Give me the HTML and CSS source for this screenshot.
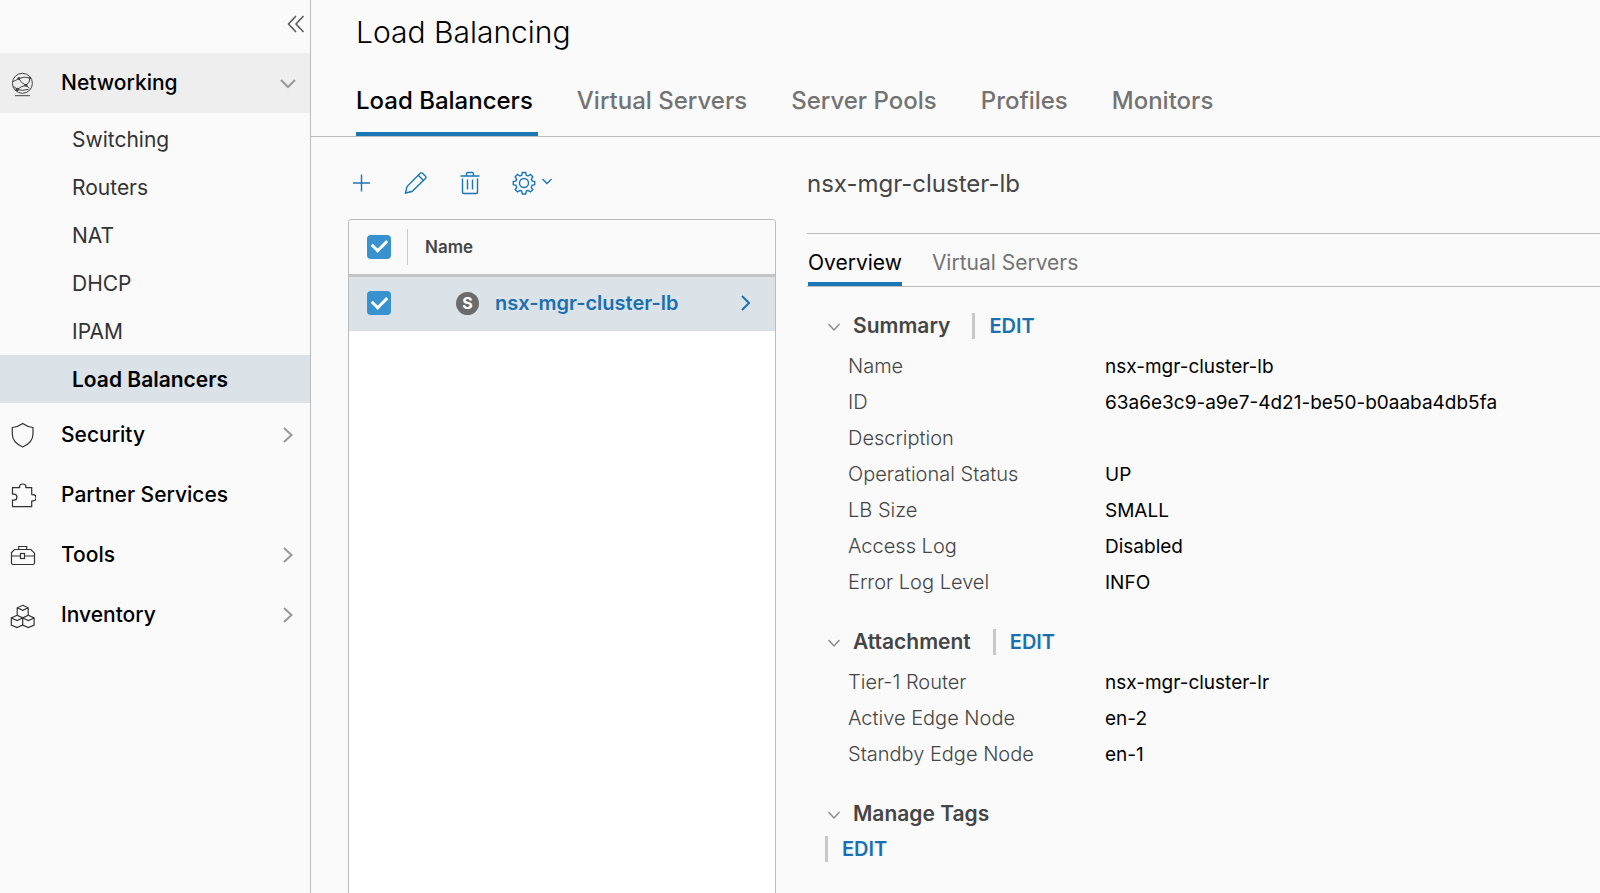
FILE: index.html
```html
<!DOCTYPE html>
<html lang="en">
<head>
<meta charset="utf-8">
<title>Load Balancing</title>
<link rel="stylesheet" href="styles.css">
</head>
<body class="app">
<nav class="sidebar" aria-label="Main">
  <div class="sidebar-top">
    <button class="icon-button" type="button" aria-label="Collapse menu">
      <svg class="icon-collapse" width="18" height="18" viewBox="0 0 18 18"><path d="M9 1 1.500 9 9 17M16.500 1 9 9l7.500 8"/></svg>
    </button>
  </div>
  <a class="nav-item nav-item-open" href="#">
    <svg class="nav-icon nav-icon-fine" viewBox="0 0 28 28"><circle cx="14.400" cy="14.300" r="10"/><path d="M7 26.700h15M10.800 9.500q5.500-2.500 11.200-.5M10.800 9.500q2 4.500 7.200 6.800M18 16.300q4-2.500 4-7.300M18 16.300q-5 .8-8.700 4.200M4.800 12.500q3-.8 6-3M5.500 17.500q2 1 3.800 3M9.300 20.500q5 1.800 11.200-.2M18 16.300l3.500 3"/><circle class="dot" cx="10.800" cy="9.500" r="1.500"/><circle class="dot" cx="22" cy="9" r="1.300"/><circle class="dot" cx="18" cy="16.300" r="1.500"/><circle class="dot" cx="9.300" cy="20.500" r="1.800"/></svg>
    <span class="nav-label">Networking</span>
    <svg class="chevron" width="18" height="18" viewBox="0 0 18 18"><path d="m2 6 7 7 7-7"/></svg>
  </a>
  <ul class="subnav">
    <li><a class="subnav-item" href="#">Switching</a></li>
    <li><a class="subnav-item" href="#">Routers</a></li>
    <li><a class="subnav-item" href="#">NAT</a></li>
    <li><a class="subnav-item" href="#">DHCP</a></li>
    <li><a class="subnav-item" href="#">IPAM</a></li>
    <li><a class="subnav-item subnav-item-active" href="#" aria-current="page">Load Balancers</a></li>
  </ul>
  <a class="nav-item" href="#">
    <svg class="nav-icon" viewBox="0 0 28 28"><path d="M14.700 2.500Q19 5.700 25 6.500V13q0 8.500-10.300 13Q4.300 21.500 4.300 13V6.500Q10.500 5.700 14.700 2.500Z"/></svg>
    <span class="nav-label">Security</span>
    <svg class="chevron" width="18" height="18" viewBox="0 0 18 18"><path d="m5 2 7.500 7L5 16"/></svg>
  </a>
  <a class="nav-item" href="#">
    <svg class="nav-icon" viewBox="0 0 28 28"><path d="M4.500 6.700h6.700c.8 0 .3-.7.3-1.200a3.200 2.500 0 0 1 6.400 0c0 .5-.5 1.200.3 1.200h5.500v6.500c0 1 .6.500 1.400.5a3 3.100 0 0 1 0 6.200c-.8 0-1.400-.5-1.400.5v5.300H4.500v-6.500h1.400a3 3 0 0 0 0-6H4.500Z"/></svg>
    <span class="nav-label">Partner Services</span>
  </a>
  <a class="nav-item" href="#">
    <svg class="nav-icon" viewBox="0 0 28 28"><path d="M6.500 8.500h16.400l3.600 3.700V22q0 1.500-1.500 1.500H5q-1.500 0-1.500-1.500V11.500ZM10.700 8.500v-3h8v3M3.500 15h8.800M16.700 15h9.800"/><rect x="12.500" y="12.500" width="4" height="5"/></svg>
    <span class="nav-label">Tools</span>
    <svg class="chevron" width="18" height="18" viewBox="0 0 18 18"><path d="m5 2 7.500 7L5 16"/></svg>
  </a>
  <a class="nav-item" href="#">
    <svg class="nav-icon" viewBox="0 0 28 28"><path d="m14.700 4.300 5.500 2.500v7.500l-5.500 2.500-5.500-2.500V6.800ZM9.200 6.800l5.500 2.500 5.500-2.500M9 14.300l5.700 2.700v7L9 26.500 3.300 24v-7ZM3.300 17 9 19.500l5.700-2.500M20.400 14.300l5.700 2.700v7l-5.700 2.500-5.700-2.500v-7ZM14.700 17l5.700 2.500 5.700-2.500"/></svg>
    <span class="nav-label">Inventory</span>
    <svg class="chevron" width="18" height="18" viewBox="0 0 18 18"><path d="m5 2 7.500 7L5 16"/></svg>
  </a>
</nav>

<main class="main">
  <header class="page-header">
    <h1 class="page-title">Load Balancing</h1>
    <nav class="tabs" aria-label="Load balancing">
      <a class="tab tab-active" href="#" aria-current="page">Load Balancers</a>
      <a class="tab" href="#">Virtual Servers</a>
      <a class="tab" href="#">Server Pools</a>
      <a class="tab" href="#">Profiles</a>
      <a class="tab" href="#">Monitors</a>
    </nav>
  </header>

  <div class="content">
    <section class="list-pane">
      <div class="toolbar">
        <button class="icon-button" type="button" aria-label="Add"><svg class="tool-icon" width="24" height="24" viewBox="0 0 24 24"><path d="M11.500 3.500v17M3 12h17"/></svg></button>
        <button class="icon-button" type="button" aria-label="Edit"><svg class="tool-icon" width="24" height="24" viewBox="0 0 24 24"><path d="m1.500 22 1.500-6.500L16.500 2q1-.8 2 .2l3 3q1 1 .2 2L8 20.500ZM14.500 4.500l4.800 4.800"/></svg></button>
        <button class="icon-button" type="button" aria-label="Delete"><svg class="tool-icon" width="24" height="24" viewBox="0 0 24 24"><path d="M2.500 5h19M4.500 7.500V21q0 1.500 1.500 1.500h12q1.500 0 1.500-1.500V7.500M8.500 4.500V3q0-1.500 1.500-1.500h4q1.500 0 1.500 1.500v1.500M9.500 8.500v10M14.500 8.500v10"/></svg></button>
        <button class="icon-button" type="button" aria-label="Actions">
          <svg class="tool-icon" width="24" height="24" viewBox="0 0 24 24"><circle cx="12" cy="12" r="4.500"/><path d="M10.300 1.500h3.400l.6 2.800 1.700.7 2.500-1.500 2.300 2.300-1.500 2.500.7 1.700 2.700.6v3.200l-2.700.6-.7 1.700 1.500 2.500-2.300 2.300-2.500-1.500-1.700.7-.6 2.900h-3.400l-.6-2.900-1.700-.7-2.500 1.500-2.300-2.300 1.500-2.500-.7-1.700-2.700-.6v-3.200l2.700-.6.7-1.700-1.500-2.500 2.300-2.300L8 5l1.700-.7Z"/></svg>
          <svg class="tool-icon tool-caret" width="12" height="24" viewBox="0 0 12 24"><path d="m1.500 8 4.500 4.500L10.500 8"/></svg>
        </button>
      </div>
      <div class="grid-panel">
        <table class="grid">
          <thead>
            <tr>
              <th class="grid-check" scope="col"><input class="checkbox" type="checkbox" aria-label="Select all" checked></th>
              <th class="grid-name" scope="col"><span class="grid-heading">Name</span></th>
            </tr>
          </thead>
          <tbody>
            <tr class="grid-row">
              <td class="grid-check"><input class="checkbox" type="checkbox" aria-label="Select nsx-mgr-cluster-lb" checked></td>
              <td class="grid-name">
                <a class="grid-link" href="#">
                  <span class="badge">S</span>
                  <span class="grid-link-text">nsx-mgr-cluster-lb</span>
                  <svg class="row-chevron" width="18" height="18" viewBox="0 0 18 18"><path d="m5 2 7 7-7 7"/></svg>
                </a>
              </td>
            </tr>
          </tbody>
        </table>
      </div>
    </section>

    <section class="detail">
      <h2 class="detail-title">nsx-mgr-cluster-lb</h2>
      <nav class="subtabs" aria-label="Details">
        <a class="subtab subtab-active" href="#" aria-current="page">Overview</a>
        <a class="subtab" href="#">Virtual Servers</a>
      </nav>
      <div class="blocks">
        <section>
          <div class="block-head">
            <svg class="fold" width="14" height="14" viewBox="0 0 14 14"><path d="m1.500 5 5.500 6 5.500-6"/></svg>
            <h3 class="block-title">Summary</h3>
            <button class="edit" type="button">EDIT</button>
          </div>
          <dl class="facts">
            <dt>Name</dt><dd>nsx-mgr-cluster-lb</dd>
            <dt>ID</dt><dd>63a6e3c9-a9e7-4d21-be50-b0aaba4db5fa</dd>
            <dt>Description</dt><dd></dd>
            <dt>Operational Status</dt><dd>UP</dd>
            <dt>LB Size</dt><dd>SMALL</dd>
            <dt>Access Log</dt><dd>Disabled</dd>
            <dt>Error Log Level</dt><dd>INFO</dd>
          </dl>
        </section>
        <section>
          <div class="block-head">
            <svg class="fold" width="14" height="14" viewBox="0 0 14 14"><path d="m1.500 5 5.500 6 5.500-6"/></svg>
            <h3 class="block-title">Attachment</h3>
            <button class="edit" type="button">EDIT</button>
          </div>
          <dl class="facts">
            <dt>Tier-1 Router</dt><dd>nsx-mgr-cluster-lr</dd>
            <dt>Active Edge Node</dt><dd>en-2</dd>
            <dt>Standby Edge Node</dt><dd>en-1</dd>
          </dl>
        </section>
        <section>
          <div class="block-head">
            <svg class="fold" width="14" height="14" viewBox="0 0 14 14"><path d="m1.500 5 5.500 6 5.500-6"/></svg>
            <h3 class="block-title">Manage Tags</h3>
          </div>
          <button class="edit" type="button">EDIT</button>
        </section>
      </div>
    </section>
  </div>
</main>
</body>
</html>
```
FILE: styles.css
```css
* { box-sizing: border-box; }

.app {
  margin: 0;
  min-height: 100vh;
  display: flex;
  background: #fafafa;
  color: #000;
  font-family: Inter, "Open Sans", sans-serif;
  font-size: 19px;
}

a { color: inherit; text-decoration: none; }

svg {
  display: block;
  flex: none;
  fill: none;
  stroke: currentColor;
}

.icon-button {
  display: flex;
  padding: 0;
  border: 0;
  background: none;
  color: inherit;
}

/* Sidebar */
.sidebar {
  flex: none;
  width: 311px;
  border-right: 1px solid #bbb;
}

.sidebar-top {
  display: flex;
  justify-content: flex-end;
  height: 53px;
  padding: 15px 5px 0 0;
  color: #565656;
}

.icon-collapse { stroke-width: 1.5; }

.nav-item {
  display: flex;
  align-items: center;
  height: 60px;
  padding: 0 13px 0 8px;
  font-size: 21px;
  font-weight: 500;
}

.nav-item-open { background: #eee; }

.nav-icon {
  width: 28px;
  height: 28px;
  margin-right: 25px;
  stroke: #333;
  stroke-width: 1.2;
}

.nav-icon-fine { stroke: #444; stroke-width: 1; }

.nav-icon .dot { fill: #444; stroke: none; }

.nav-label {
  flex: 1;
  padding-bottom: 1px;
}

.chevron { color: #999; stroke-width: 2; }

.subnav {
  margin: 0;
  padding: 2px 0;
  list-style: none;
}

.subnav-item {
  display: flex;
  align-items: center;
  height: 48px;
  padding-left: 72px;
  color: #333;
  font-size: 21px;
}

.subnav-item-active {
  background: #dbe3e9;
  color: #000;
  font-weight: 600;
}

/* Page header */
.main {
  flex: 1;
  min-width: 0;
  display: flex;
  flex-direction: column;
}

.page-header {
  padding: 12px 0 0 45px;
  border-bottom: 1px solid #bbb;
}

.page-title {
  margin: 0;
  font-size: 30px;
  line-height: 40px;
  font-weight: 300;
}

.tabs {
  display: flex;
  gap: 39px;
  padding-top: 20px;
}

.tab {
  padding: 13px 5px 15px 0;
  border-bottom: 4px solid transparent;
  color: #737373;
  font-size: 24px;
  line-height: 32px;
  font-weight: 500;
}

.tab-active { border-color: #1a76b7; color: #000; }

/* Content */
.content {
  flex: 1;
  display: grid;
  grid-template-columns: minmax(0, 428fr) minmax(0, 793fr);
  gap: 31px;
  padding-left: 37px;
}

.list-pane { display: flex; flex-direction: column; }

.toolbar {
  display: flex;
  gap: 30px;
  padding: 34px 0 24px 2px;
  color: #1a76b7;
}

.tool-icon { stroke-width: 1.4; }
.tool-caret { margin-left: 5px; }

.grid-panel {
  flex: 1;
  border: 1px solid #bbb;
  border-bottom: 0;
  border-radius: 4px 4px 0 0;
  background: #fff;
  overflow: hidden;
}

.grid {
  width: 100%;
  border-collapse: collapse;
}

.grid th {
  height: 55px;
  padding: 0;
  border-bottom: 3px solid #c4c4c4;
  background: #fafafa;
  text-align: left;
}

.grid td {
  height: 55px;
  padding: 0;
  border-bottom: 1px solid #ddd;
}

.grid-row { background: #dbe3e9; }

.grid .grid-check {
  width: 58px;
  padding-left: 18px;
}

.grid-heading {
  display: block;
  padding-left: 17px;
  border-left: 1px solid #ccc;
  color: #454545;
  font-size: 17px;
  line-height: 36px;
  font-weight: 600;
}

.checkbox {
  display: flex;
  align-items: center;
  justify-content: center;
  appearance: none;
  width: 24px;
  height: 24px;
  margin: 0;
  border-radius: 4px;
  background: #3892cf;
}

.checkbox:checked::before {
  content: "";
  width: 12px;
  height: 7px;
  margin-bottom: 5px;
  border: solid #fff;
  border-width: 0 0 3px 3px;
  transform: rotate(-45deg);
}

.grid-link {
  display: flex;
  align-items: center;
  padding: 0 20px 0 49px;
  color: #1a70b0;
  font-size: 20px;
  font-weight: 600;
}

.badge {
  width: 23px;
  margin-right: 16px;
  border-radius: 50%;
  background: #6b6b6b;
  color: #fff;
  font-size: 16px;
  line-height: 23px;
  font-weight: 700;
  text-align: center;
}

.grid-link-text { flex: 1; }

.row-chevron { stroke-width: 2; }

/* Details */
.detail-title {
  margin: 0;
  padding: 29px 0 31px;
  border-bottom: 1px solid #bbb;
  color: #454545;
  font-size: 24px;
  line-height: 36px;
  font-weight: 400;
}

.subtabs {
  display: flex;
  gap: 30px;
  padding-left: 1px;
  border-bottom: 1px solid #bbb;
}

.subtab {
  padding: 15px 0 5px;
  border-bottom: 4px solid transparent;
  color: #737373;
  font-size: 21px;
  line-height: 28px;
}

.subtab-active { border-color: #1a76b7; color: #000; }

.blocks {
  display: flex;
  flex-direction: column;
  gap: 19px;
  padding: 16px 0 24px 18px;
}

.block-head {
  display: flex;
  align-items: center;
  height: 45px;
  padding-left: 2px;
}

.fold { color: #8c8c8c; stroke-width: 1.5; }

.block-title {
  margin: 0 22px 0 12px;
  color: #454545;
  font-size: 21px;
  font-weight: 600;
}

.edit {
  display: block;
  height: 26px;
  padding: 0 0 0 14px;
  border: 0;
  border-left: 3px solid #c8c8c8;
  background: none;
  color: #1a70b0;
  font-family: inherit;
  font-size: 20px;
  line-height: 26px;
  font-weight: 600;
}

.facts {
  display: grid;
  grid-template-columns: 257px 1fr;
  grid-auto-rows: 36px;
  align-items: center;
  margin: 0;
  padding-left: 23px;
}

.facts dt {
  color: #454545;
  font-size: 20px;
  font-weight: 300;
}

.facts dd { margin: 0; }
```
